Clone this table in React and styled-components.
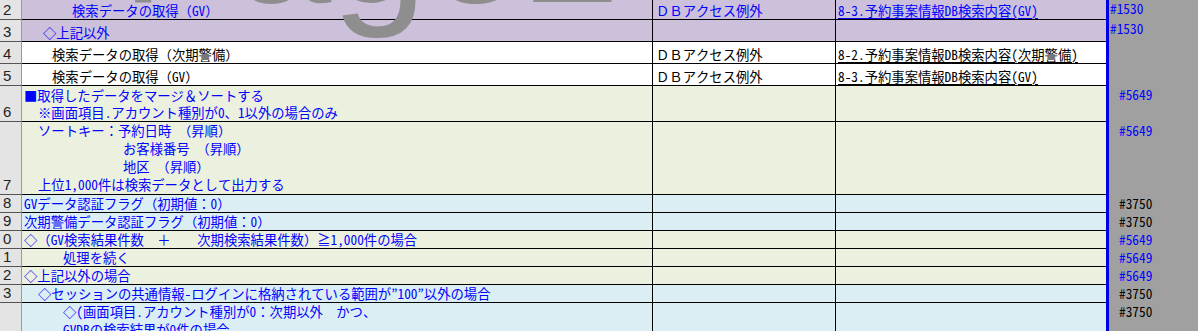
import React from 'react';
import styled, { createGlobalStyle } from 'styled-components';

const GlobalStyle = createGlobalStyle`
	html, body {
		margin: 0;
		padding: 0;
		background: #fff;
		overflow: hidden;
	}
	body {
		font-family: "Noto Sans Mono CJK JP", "Noto Sans CJK JP", "DejaVu Sans Mono", monospace;
	}
`;

const tones = {
	purple: '#ccc0da',
	white: '#ffffff',
	green: '#ebf1de',
	blue: '#daeef3',
};

const inks = {
	blue: '#0000ff',
	black: '#000000',
};

const rows = [
	{
		num: '2', h: 20, tone: 'purple', ink: 'blue',
		lines: [{ at: 72, text: '検索データの取得（GV）' }],
		kind: 'ＤＢアクセス例外', ref: '8-3.予約事案情報DB検索内容(GV)',
		tag: '#1530', tagInk: 'blue', tagAt: 1,
	},
	{
		num: '3', h: 22, tone: 'purple', ink: 'blue',
		lines: [{ at: 43, text: '◇上記以外' }],
		tag: '#1530', tagInk: 'blue', tagAt: 1,
	},
	{
		num: '4', h: 22, tone: 'white', ink: 'black',
		lines: [{ at: 52, text: '検索データの取得（次期警備）' }],
		kind: 'ＤＢアクセス例外', ref: '8-2.予約事案情報DB検索内容(次期警備)',
	},
	{
		num: '5', h: 22, tone: 'white', ink: 'black',
		lines: [{ at: 52, text: '検索データの取得（GV）' }],
		kind: 'ＤＢアクセス例外', ref: '8-3.予約事案情報DB検索内容(GV)',
	},
	{
		num: '6', h: 36, tone: 'green', ink: 'blue',
		lines: [
			{ at: 24, text: '■取得したデータをマージ＆ソートする' },
			{ at: 38, text: '※画面項目.アカウント種別が0、1以外の場合のみ' },
		],
		tag: '#5649', tagInk: 'blue', tagAt: 10,
	},
	{
		num: '7', h: 73, lh: 18, tone: 'green', ink: 'blue',
		lines: [
			{ at: 38, text: 'ソートキー：予約日時　（昇順）' },
			{ at: 123, text: 'お客様番号　（昇順）' },
			{ at: 123, text: '地区　（昇順）' },
			{ at: 38, text: '上位1,000件は検索データとして出力する' },
		],
		tag: '#5649', tagInk: 'blue', tagAt: 10,
	},
	{
		num: '8', h: 18, tone: 'blue', ink: 'blue',
		lines: [{ at: 24, text: 'GVデータ認証フラグ（初期値：0）' }],
		tag: '#3750', tagInk: 'black', tagAt: 10,
	},
	{
		num: '9', h: 18, tone: 'blue', ink: 'blue',
		lines: [{ at: 24, text: '次期警備データ認証フラグ（初期値：0）' }],
		tag: '#3750', tagInk: 'black', tagAt: 10,
	},
	{
		num: '0', h: 18, tone: 'green', ink: 'blue',
		lines: [{ at: 24, text: '◇（GV検索結果件数　＋　　次期検索結果件数）≧1,000件の場合' }],
		tag: '#5649', tagInk: 'blue', tagAt: 10,
	},
	{
		num: '1', h: 18, tone: 'green', ink: 'blue',
		lines: [{ at: 63, text: '処理を続く' }],
		tag: '#5649', tagInk: 'blue', tagAt: 10,
	},
	{
		num: '2', h: 18, tone: 'green', ink: 'blue',
		lines: [{ at: 24, text: '◇上記以外の場合' }],
		tag: '#5649', tagInk: 'blue', tagAt: 10,
	},
	{
		num: '3', h: 18, tone: 'blue', ink: 'blue',
		lines: [{ at: 38, text: '◇セッションの共通情報-ログインに格納されている範囲が”100”以外の場合' }],
		tag: '#3750', tagInk: 'black', tagAt: 10,
	},
	{
		num: '', h: 37, lh: 18, tone: 'blue', ink: 'blue',
		lines: [
			{ at: 63, text: '◇(画面項目.アカウント種別が0：次期以外　かつ、' },
			{ at: 63, text: 'GVDBの検索結果が0件の場合' },
		],
		tag: '#3750', tagInk: 'black', tagAt: 10,
	},
];

const App = () => (
	<>
		<GlobalStyle />
		<Sheet>
			{rows.map((row, i) => (
				<Row key={i} $h={row.h}>
					<RowHead>{row.num}</RowHead>
					<Cell $tone={row.tone} $ink={row.ink}>
						{row.lines.map((line, j) => (
							<Line key={j} $indent={line.at - 22} $lh={row.lh}>{line.text}</Line>
						))}
					</Cell>
					<Cell $tone={row.tone} $ink={row.ink}>
						{row.kind && <Line $indent={3}>{row.kind}</Line>}
					</Cell>
					<Cell $tone={row.tone} $ink={row.ink} $last>
						{row.ref && (
							<Line $indent={2}>
								<RefLink>{row.ref}</RefLink>
							</Line>
						)}
					</Cell>
					<PageBreak />
					<Margin $ink={row.tagInk} $indent={row.tagAt}>{row.tag}</Margin>
				</Row>
			))}
			<Watermark>Page 2</Watermark>
		</Sheet>
	</>
);

const Sheet = styled.div`
	position: relative;
	width: 1198px;
	height: 331px;
	overflow: hidden;
	background: #a0a0a0;
`;

const Row = styled.div`
	display: grid;
	grid-template-columns: 22px 631px 183px 270px 3px 1fr;
	grid-template-rows: minmax(0, 1fr);
	height: ${p => p.$h}px;
	overflow: hidden;
`;

const RowHead = styled.div`
	display: flex;
	align-items: flex-end;
	min-height: 0;
	padding: 0 0 1px 3px;
	background: #e4e4e4;
	border-right: 1px solid #9a9a9a;
	border-bottom: 1px solid #555;
	font-family: "Liberation Sans", Arial, sans-serif;
	font-size: 15px;
	line-height: 16px;
	color: #222;
	overflow: hidden;
`;

const Cell = styled.div`
	display: flex;
	flex-direction: column;
	justify-content: flex-end;
	min-width: 0;
	min-height: 0;
	overflow: hidden;
	background: ${p => tones[p.$tone]};
	color: ${p => inks[p.$ink]};
	border-right: ${p => (p.$last ? 'none' : '1px solid #000')};
	border-bottom: 1px solid #000;
	font-size: 13.33px;
`;

const Line = styled.div`
	flex: none;
	padding-left: ${p => p.$indent}px;
	line-height: ${p => p.$lh || 17}px;
	white-space: nowrap;
`;

const RefLink = styled.span`
	text-decoration: underline;
	text-underline-offset: 2px;
`;

const PageBreak = styled.div`background: #0000e6;`;

const Margin = styled.div`
	min-height: 0;
	padding: 1px 0 0 ${p => p.$indent}px;
	background: #a0a0a0;
	color: ${p => inks[p.$ink]};
	font-size: 13.33px;
	line-height: 16px;
	white-space: nowrap;
`;

const Watermark = styled.div`
	position: absolute;
	left: 121px;
	top: -158px;
	font-family: "Liberation Sans", Arial, sans-serif;
	font-size: 172px;
	line-height: 200px;
	word-spacing: -46px;
	color: #8e8e8e;
	white-space: nowrap;
	pointer-events: none;
`;

export default App;
